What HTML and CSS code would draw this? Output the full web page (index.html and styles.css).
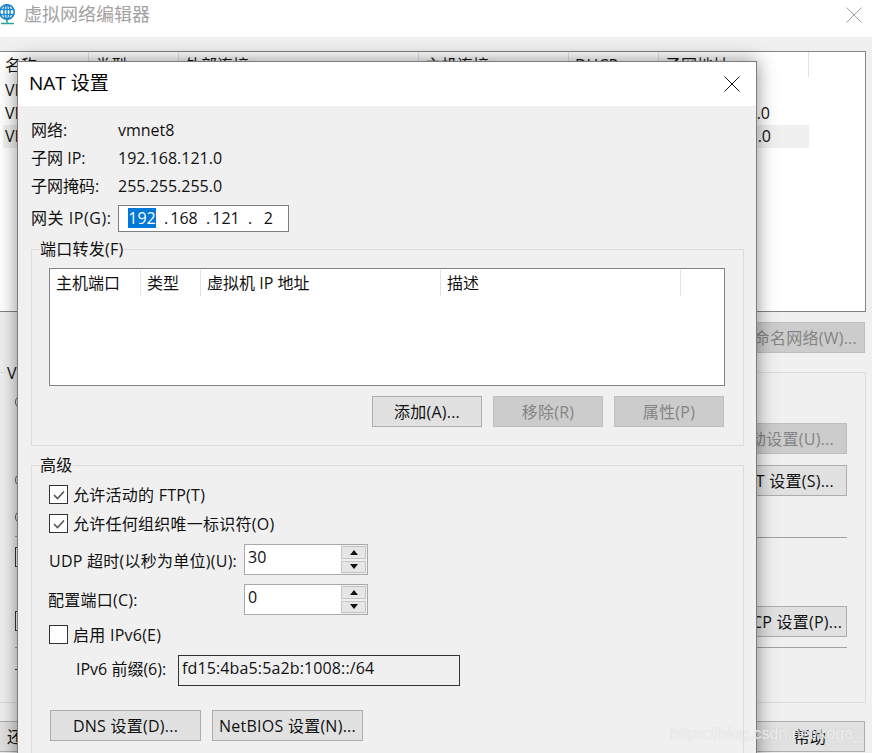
FILE: index.html
```html
<!DOCTYPE html>
<html lang="zh">
<head>
<meta charset="utf-8">
<title>虚拟网络编辑器</title>
<link rel="stylesheet" href="styles.css">
</head>
<body>
<div class="window">
  <header class="win-title">
    <svg class="globe" width="18" height="22" viewBox="0 0 18 22">
      <circle cx="8" cy="9" r="7.2" fill="#fff" stroke="#1b87c9" stroke-width="1.6"/>
      <ellipse cx="8" cy="9" rx="3.2" ry="7.2" fill="none" stroke="#1b87c9" stroke-width="1.4"/>
      <path d="M1 6.5h14M1 11.5h14M8 2v14" stroke="#1b87c9" stroke-width="1.4" fill="none"/>
      <path d="M8 16.5v3M2 20.5h13" stroke="#2aa198" stroke-width="1.6" fill="none"/>
    </svg>
    <span class="win-name">虚拟网络编辑器</span>
    <svg class="x-icon" width="16" height="16" viewBox="0 0 16 16"><path d="M.5.5l15 15M15.5.5l-15 15" stroke="#a0a0a0" fill="none"/></svg>
  </header>
  <main class="win-body">
    <section class="net-list">
      <div class="net-head">
        <span class="nh nh-name">名称</span><span class="nh nh-type">类型</span><span class="nh nh-ext">外部连接</span><span class="nh nh-host">主机连接</span><span class="nh nh-dhcp">DHCP</span><span class="nh nh-sub">子网地址</span>
      </div>
      <div class="net-row"><span>VMnet0</span></div>
      <div class="net-row"><span>VMnet1</span><span class="net-sub">.0</span></div>
      <div class="net-row net-row-sel"><span>VMnet8</span><span class="net-sub">.0</span></div>
    </section>
    <div class="rename-row"><button class="btn btn-off btn-rename" type="button">重命名网络(W)...</button></div>
    <section class="net-group">
      <span class="net-group-label">VMnet 信息</span>
      <div class="stubs">
        <i class="stub-radio stub-r1"></i>
        <i class="stub-radio stub-r2"></i>
        <i class="stub-radio stub-r3"></i>
        <i class="stub-line stub-l1"></i>
        <i class="stub-box stub-b1"></i>
        <i class="stub-box stub-b2"></i>
        <i class="stub-line stub-l2"></i>
        <i class="stub-line stub-l3"></i>
      </div>
      <div class="actions">
        <button class="btn btn-off btn-act a-auto" type="button">自动设置(U)...</button>
        <button class="btn btn-act a-nat" type="button">NAT 设置(S)...</button>
        <hr class="act-line a-line1">
        <button class="btn btn-act a-dhcp" type="button">DHCP 设置(P)...</button>
        <hr class="act-line a-line2">
      </div>
    </section>
    <footer class="win-foot">
      <button class="btn btn-restore" type="button">还原默认设置(R)</button>
      <button class="btn btn-help" type="button">帮助</button>
    </footer>
  </main>

  <div class="dialog">
    <header class="dlg-title">
      <span class="dlg-name">NAT 设置</span>
      <svg class="x-icon" width="16" height="16" viewBox="0 0 16 16"><path d="M.5.5l15 15M15.5.5l-15 15" stroke="#111" fill="none"/></svg>
    </header>
    <div class="dlg-body">
      <div class="info"><span class="info-k">网络:</span><span>vmnet8</span></div>
      <div class="info"><span class="info-k">子网 IP:</span><span>192.168.121.0</span></div>
      <div class="info"><span class="info-k">子网掩码:</span><span>255.255.255.0</span></div>
      <div class="info info-gw">
        <span class="info-k">网关 IP(G):</span>
        <div class="ip-box"><span class="ip-sel">192</span><span class="ip-dot">.</span><span class="ip-seg">168</span><span class="ip-dot">.</span><span class="ip-seg">121</span><span class="ip-dot">.</span><span class="ip-seg ip-last">2</span></div>
      </div>

      <fieldset class="group group-ports">
        <legend class="legend">端口转发(F)</legend>
        <div class="ports">
          <div class="ports-head">
            <span class="ph ph-port">主机端口</span><span class="ph ph-type">类型</span><span class="ph ph-ip">虚拟机 IP 地址</span><span class="ph ph-desc">描述</span>
          </div>
        </div>
        <div class="ports-btns">
          <button class="btn btn-w110" type="button">添加(A)...</button>
          <button class="btn btn-off btn-w110" type="button">移除(R)</button>
          <button class="btn btn-off btn-w110" type="button">属性(P)</button>
        </div>
      </fieldset>

      <fieldset class="group group-adv">
        <legend class="legend">高级</legend>
        <label class="check check-1"><span class="box"><svg width="14" height="12" viewBox="0 0 14 12"><path d="M2 6l3.5 3.5L12 2.5" stroke="#555" stroke-width="1.6" fill="none"/></svg></span>允许活动的 FTP(T)</label>
        <label class="check check-2"><span class="box"><svg width="14" height="12" viewBox="0 0 14 12"><path d="M2 6l3.5 3.5L12 2.5" stroke="#555" stroke-width="1.6" fill="none"/></svg></span>允许任何组织唯一标识符(O)</label>
        <div class="field field-udp">
          <span class="field-k">UDP 超时(以秒为单位)(U):</span>
          <div class="spin"><span class="spin-val">30</span><span class="spin-btns"><span class="spin-b"><i class="tri-up"></i></span><span class="spin-b"><i class="tri-down"></i></span></span></div>
        </div>
        <div class="field field-port">
          <span class="field-k">配置端口(C):</span>
          <div class="spin"><span class="spin-val">0</span><span class="spin-btns"><span class="spin-b"><i class="tri-up"></i></span><span class="spin-b"><i class="tri-down"></i></span></span></div>
        </div>
        <label class="check check-3"><span class="box"></span>启用 IPv6(E)</label>
        <div class="prefix">
          <span class="prefix-k">IPv6 前缀(6):</span>
          <div class="prefix-val">fd15:4ba5:5a2b:1008::/64</div>
        </div>
        <div class="adv-btns">
          <button class="btn btn-w151" type="button">DNS 设置(D)...</button>
          <button class="btn btn-w151" type="button">NetBIOS 设置(N)...</button>
        </div>
      </fieldset>
    </div>
  </div>

  <div class="watermark">https://blog.csdn.net/koga_</div>
</div>
</body>
</html>
```
FILE: styles.css
```css
* { box-sizing: border-box; }
html, body { margin: 0; padding: 0; height: 100%; overflow: hidden; background: #fff; }
body {
  font-family: "Open Sans", "Noto Sans CJK SC", sans-serif;
  font-size: 16px;
  color: #111;
}
.window { position: relative; width: 872px; height: 753px; overflow: hidden; background: #f0f0f0; display: flex; flex-direction: column; }

/* background window */
.win-title { height: 37px; flex: none; background: #fff; display: flex; align-items: flex-start; }
.globe { margin: 3px 0 0 -1px; flex: none; }
.win-name { margin-left: 7px; font-size: 18px; line-height: 28px; color: #a2a2a2; }
.x-icon { flex: none; }
.win-title .x-icon { margin-left: auto; margin-right: 10px; margin-top: 7px; }
.win-body { flex: 1; display: flex; flex-direction: column; min-height: 0; }

.net-list { margin: 14px 6px 0 -2px; height: 261px; background: #fff; border: 1px solid #82828a; flex: none; }
.net-head { display: flex; height: 25px; }
.nh { height: 25px; border-right: 1px solid #e2e2e2; padding: 3px 0 0 6px; line-height: 21px; }
.nh-name { width: 90px; padding-left: 6px; }
.nh-type { width: 90px; }
.nh-ext { width: 240px; }
.nh-host { width: 150px; }
.nh-dhcp { width: 90px; }
.nh-sub { width: 150px; }
.net-row { display: flex; justify-content: space-between; height: 23px; line-height: 22px; padding: 0 40px 0 6px; width: 811px; }
.net-head + .net-row { margin-top: 2px; }
.net-row-sel { background: #f0f0f0; margin-left: 4px; padding-left: 2px; padding-right: 38px; width: 806px; }
.rename-row { display: flex; justify-content: flex-end; margin: 10px 7px 0 0; flex: none; }
.btn { height: 31px; border: 1px solid #adadad; background: #e1e1e1; font: inherit; letter-spacing: .25px; line-height: 27px; color: #111; padding: 2px 0 0; white-space: nowrap; }
.btn-off { background: #ccc; border-color: #bfbfbf; color: #848484; }
.btn-rename { width: 140px; text-align: right; padding-right: 7px; }
.net-group { position: relative; display: flex; justify-content: space-between; flex: none; height: 331px; margin: 19px 6px 0 -2px; border: 1px solid #dcdcdc; }
.net-group-label { position: absolute; left: 6px; top: -10px; line-height: 20px; background: #f0f0f0; padding: 0 2px; }
.stubs { position: relative; width: 40px; }
.stub-radio { position: absolute; left: 16px; width: 14px; height: 14px; border: 1px solid #555; border-radius: 50%; background: #fff; }
.stub-r1 { top: 22px; }
.stub-r2 { top: 100px; }
.stub-r3 { top: 137px; }
.stub-box { position: absolute; left: 16px; width: 18px; height: 20px; border: 1px solid #333; background: #fff; }
.stub-b1 { top: 174px; }
.stub-b2 { top: 238px; }
.stub-line { position: absolute; left: 16px; width: 10px; height: 1px; background: #a0a0a0; }
.stub-l1 { top: 163px; }
.stub-l2 { top: 274px; }
.stub-l3 { top: 296px; background: #333; }
.actions { width: 300px; margin-right: 18px; display: flex; flex-direction: column; align-items: flex-end; padding-top: 50px; }
.btn-act { width: 120px; text-align: right; padding-right: 12px; flex: none; }
.a-nat { margin-top: 11px; }
.act-line { width: 120px; height: 1px; border: 0; background: #a0a0a0; margin: 0; flex: none; }
.a-line1 { margin-top: 41px; }
.a-dhcp { margin-top: 68px; padding-right: 8px; }
.a-line2 { margin-top: 10px; }
.win-foot { display: flex; justify-content: space-between; margin: 18px 7px 0 -2px; flex: none; }
.btn-restore { width: 130px; text-align: left; padding-left: 8px; }
.btn-help { width: 110px; text-align: center; }

/* dialog */
.dialog {
  position: absolute; left: 17px; top: 61px; width: 740px; height: 720px;
  background: #f0f0f0; border: 1px solid #7c7c7c;
  box-shadow: 0 0 18px rgba(0, 0, 0, .45);
}
.dlg-title { height: 44px; background: #fff; display: flex; align-items: center; justify-content: space-between; padding: 0 16px 0 11px; }
.dlg-name { font-size: 19px; line-height: 42px; color: #000; margin-top: -2px; }
.dlg-body { padding: 10px 12px 0 13px; }
.info { display: flex; height: 28px; line-height: 28px; align-items: center; }
.info-k { width: 87px; flex: none; }
.info-gw { height: 27px; margin-top: 5px; }
.info-gw .info-k { letter-spacing: .55px; line-height: 24px; padding-bottom: 2px; white-space: nowrap; }
.ip-box { width: 171px; height: 27px; border: 1px solid #7f7f7f; background: #fff; display: flex; align-items: flex-start; padding: 2px 0 0 9px; line-height: 20px; }
.ip-sel { background: #0078d7; color: #fff; width: 28px; text-align: center; }
.ip-dot { width: 14px; text-align: center; padding-left: 6px; }
.ip-seg { width: 28px; text-align: center; }
.ip-last { width: 19px; text-align: right; }

.group { margin: 0; padding: 0 17px; border: 1px solid #dcdcdc; min-width: 0; }
.legend { padding: 0; margin-left: -9px; line-height: 18px; letter-spacing: .25px; }
.group-ports { height: 206px; margin-top: 8px; }
.ports { margin-top: 10px; height: 118px; width: 676px; background: #fff; border: 1px solid #82828a; }
.ports-head { display: flex; height: 26px; margin-top: 1px; }
.ph { border-right: 1px solid #e2e2e2; height: 26px; line-height: 26px; padding-left: 6px; }
.ph-port { width: 91px; }
.ph-type { width: 60px; }
.ph-ip { width: 240px; }
.ph-desc { width: 240px; }
.ports-btns { display: flex; justify-content: flex-end; gap: 11px; margin-top: 10px; padding-right: 2px; }
.btn-w110 { width: 110px; }
.group-adv { margin-top: 10px; height: 400px; padding: 0 17px; }
.check { display: flex; align-items: flex-start; height: 18px; line-height: 20px; white-space: nowrap; letter-spacing: .25px; }
.box { width: 19px; height: 19px; flex: none; border: 1px solid #333; background: #fff; margin-right: 5px; display: flex; align-items: center; justify-content: center; }
.check-1 { margin-top: 11px; }
.check-2 { margin-top: 11px; }
.field { display: flex; align-items: center; }
.field-k { width: 195px; flex: none; white-space: nowrap; line-height: 20px; padding-top: 1px; letter-spacing: .25px; }
.field-udp { margin-top: 12px; }
.field-udp .field-k { padding-top: 3px; }
.field-port { margin-top: 9px; }
.field-port .field-k { margin-left: -1px; width: 196px; }
.spin { width: 124px; height: 31px; border: 1px solid #a9a9a9; background: #fff; display: flex; justify-content: space-between; }
.spin-val { padding-left: 3px; line-height: 24px; }
.spin-btns { width: 26px; display: flex; flex-direction: column; gap: 2px; padding: 1px 1px 1px 0; background: #f0f0f0; }
.spin-b { flex: 1; background: #e6e6e6; border: 1px solid #c4c4c4; display: flex; align-items: center; justify-content: center; }
.tri-up { width: 0; height: 0; border: 4.5px solid transparent; border-top: 0; border-bottom: 5px solid #111; }
.tri-down { width: 0; height: 0; border: 4.5px solid transparent; border-bottom: 0; border-top: 5px solid #111; }
.check-3 { margin-top: 10px; }
.prefix { display: flex; align-items: center; margin-top: 12px; margin-left: 27px; }
.prefix-k { width: 102px; flex: none; line-height: 24px; padding-bottom: 3px; white-space: nowrap; }
.prefix-val { width: 282px; height: 31px; border: 1px solid #333; background: #f0f0f0; padding-left: 3px; line-height: 24px; letter-spacing: .13px; }
.adv-btns { display: flex; gap: 11px; margin-top: 24px; margin-left: 1px; }
.btn-w151 { width: 151px; }

.watermark {
  position: absolute; right: 10px; top: 724px; line-height: 20px;
  font-family: "Liberation Sans", sans-serif; font-size: 16px;
  color: rgba(255, 255, 255, .72);
  text-shadow: 0 0 1px rgba(170, 170, 170, .6);
}
```
